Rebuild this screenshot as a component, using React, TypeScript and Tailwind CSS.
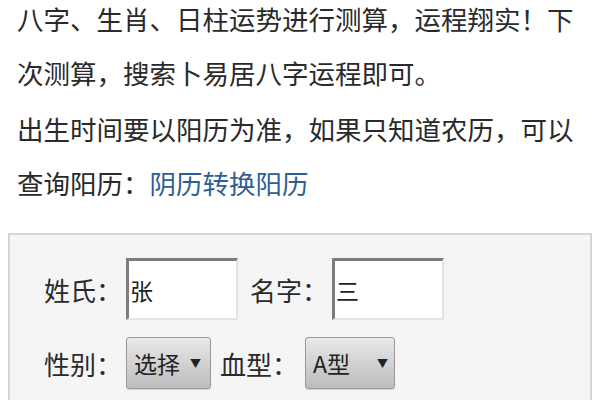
const FONT = "font-['Noto_Sans_CJK_SC','Noto_Sans',sans-serif]";

const TextInput: React.FC<{ value: string }> = ({ value }) => (
  <input
    readOnly
    value={value}
    className="w-[112px] h-[62px] bg-white pl-[1px] text-[23px] text-[#222] outline-none border-solid border-t-[3px] border-l-[3px] border-r-2 border-b-2 border-t-[#7c7c7c] border-l-[#7c7c7c] border-r-[#e4e4e4] border-b-[#e4e4e4]"
  />
);

const Select: React.FC<{ label: string; width: string; gap: string }> = ({
  label,
  width,
  gap,
}) => (
  <div
    className={`${width} h-[52px] flex items-center pl-[7px] rounded-[3px] border border-[#9a9a9a] bg-linear-to-b from-[#e9e9e9] to-[#bcbcbc] shadow-[0_1px_1px_rgba(0,0,0,0.15)]`}
  >
    <span className="text-[23px] text-[#222] leading-none">{label}</span>
    <span className={`${gap} text-[11px] text-[#222] leading-none`}>▼</span>
  </div>
);

export default function App() {
  return (
    <div className={`w-[600px] h-[400px] overflow-hidden bg-white ${FONT}`}>
      <div className="pl-[17px] mt-[-8px] text-[26.5px] leading-[54px] text-[#2a2a2a] whitespace-nowrap">
        <p>八字、生肖、日柱运势进行测算，运程翔实！下</p>
        <p>次测算，搜索卜易居八字运程即可。</p>
        <p className="mt-[2px]">出生时间要以阳历为准，如果只知道农历，可以</p>
        <p>
          查询阳历：<span className="text-[#2e5f92]">阴历转换阳历</span>
        </p>
      </div>

      <div className="mt-[23px] ml-[8px] w-[584px] h-[200px] border-2 border-[#d6d6d6] bg-[#f5f5f5] pl-[34px] pt-[23px]">
        <div className="flex items-center text-[26px] text-[#2a2a2a]">
          <span className="w-[82px]">姓氏：</span>
          <TextInput value="张" />
          <span className="ml-[12px] w-[82px]">名字：</span>
          <TextInput value="三" />
        </div>
        <div className="mt-[17px] flex items-center text-[26px] text-[#2a2a2a]">
          <span className="w-[82px]">性别：</span>
          <Select label="选择" width="w-[85px]" gap="ml-[10px]" />
          <span className="ml-[9px] w-[85px]">血型：</span>
          <Select label="A型" width="w-[90px]" gap="ml-[27px]" />
        </div>
      </div>
    </div>
  );
}
